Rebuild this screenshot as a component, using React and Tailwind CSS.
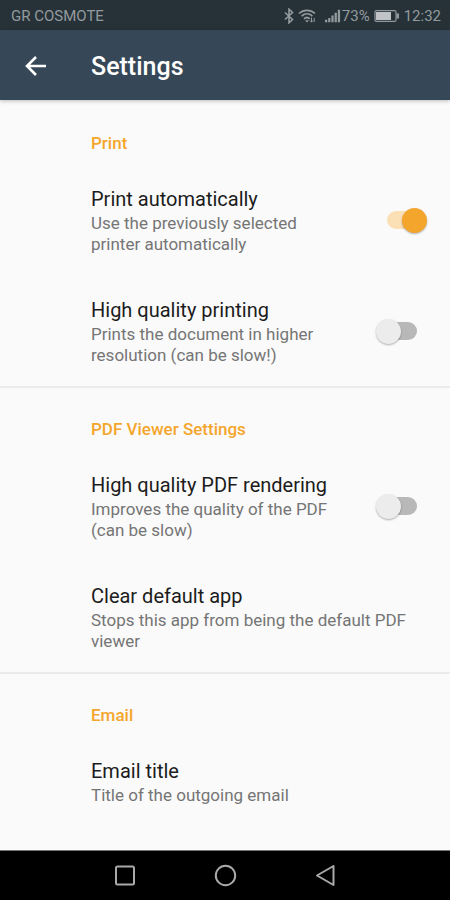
import { useState } from 'react';

const SECTIONS = [
  {
    title: 'Print',
    items: [
      {
        id: 'print-auto',
        title: 'Print automatically',
        summary: 'Use the previously selected printer automatically',
        toggle: true,
      },
      {
        id: 'print-hq',
        title: 'High quality printing',
        summary: 'Prints the document in higher resolution (can be slow!)',
        toggle: true,
      },
    ],
  },
  {
    title: 'PDF Viewer Settings',
    items: [
      {
        id: 'pdf-hq',
        title: 'High quality PDF rendering',
        summary: 'Improves the quality of the PDF (can be slow)',
        toggle: true,
      },
      {
        id: 'clear-default',
        title: 'Clear default app',
        summary: 'Stops this app from being the default PDF viewer',
      },
    ],
  },
  {
    title: 'Email',
    items: [
      {
        id: 'email-title',
        title: 'Email title',
        summary: 'Title of the outgoing email',
      },
    ],
  },
];

function StatusBar() {
  return (
    <div className="flex h-[30px] items-center justify-between bg-[#263238] pt-0.5 pr-[9px] pl-[11px] text-[15px] leading-5 text-[#939a9e]">
      <span>GR COSMOTE</span>
      <div className="flex items-center">
        <svg className="mr-1 h-4 w-[10px]" viewBox="0 0 10 16" fill="none" stroke="currentColor" strokeWidth="1.6">
          <path d="M1 4.5 8.5 11.5 5 14.8V1.2L8.5 4.5 1 11.5" />
        </svg>
        <svg className="mr-2 h-4 w-[18px]" viewBox="0 0 18 16" fill="none" stroke="currentColor" strokeWidth="1.7">
          <path d="M1 5.5C5.5 1.2 12.5 1.2 17 5.5" />
          <path d="M3.6 8.2C6.8 5.2 11.2 5.2 14.4 8.2" />
          <path d="M6 10.8C7.8 9.2 10 9.2 11.8 10.8" />
          <path d="M7 12.2h4L9 14.6z" fill="currentColor" stroke="none" />
          <path d="M13.5 9.5v4.5M12 12.5l1.5 1.7 1.5-1.7M16.2 14v-4" strokeWidth="1" />
        </svg>
        <svg className="mr-px h-4 w-[17px]" viewBox="0 0 18 16" fill="currentColor">
          <path d="M1 12h2.400v2.500H1zM4.400 10h2.400v4.500h-2.400zM7.800 7.500h2.400v7h-2.400zM11.200 4.500h2.400v10h-2.400zM14.600 1.500h2.400v13h-2.400z" />
        </svg>
        <span className="mr-1">73%</span>
        <svg className="mr-1 h-3 w-[26px]" viewBox="0 0 26 12">
          <rect x="1" y="0.600" width="21" height="10.800" rx="1.500" fill="none" stroke="currentColor" strokeWidth="1.200" />
          <rect x="2" y="2" width="15" height="8" fill="#c0c4c6" />
          <path d="M22.500 3.500H25v5h-2.500z" fill="currentColor" />
        </svg>
        <span>12:32</span>
      </div>
    </div>
  );
}

function Toggle({ id, checked, onChange }) {
  return (
    <span className="relative flex h-8 w-[51px] shrink-0 items-center justify-center">
      <input
        id={id}
        type="checkbox"
        role="switch"
        checked={checked}
        onChange={onChange}
        className="peer h-[18px] w-[30px] appearance-none rounded-full bg-[#b8b8b8] checked:bg-[#fbe0b5]"
      />
      <span className="pointer-events-none absolute left-0 size-[25px] rounded-full bg-[#ececec] shadow-[0_1px_2px_rgba(0,0,0,0.3)] peer-checked:right-0 peer-checked:left-auto peer-checked:bg-[#f4a62c]" />
    </span>
  );
}

function SettingText({ item }) {
  return (
    <>
      <span className="block text-xl leading-7 text-[#1c1c1c]">{item.title}</span>
      <span className="block text-[17px] leading-[21px] text-[#757575]">{item.summary}</span>
    </>
  );
}

function SettingRow({ item, checked, onToggle }) {
  if (item.toggle) {
    return (
      <div className="flex items-center justify-between pt-[23px] pr-[23px] pb-[18px] pl-[91px]">
        <label htmlFor={item.id} className="max-w-[250px]">
          <SettingText item={item} />
        </label>
        <Toggle id={item.id} checked={checked} onChange={onToggle} />
      </div>
    );
  }

  return (
    <button type="button" className="block w-full pt-[23px] pr-5 pb-[18px] pl-[91px] text-left">
      <SettingText item={item} />
    </button>
  );
}

export default function App() {
  const [values, setValues] = useState({ 'print-auto': true, 'print-hq': false, 'pdf-hq': false });

  const toggle = (id) => setValues((prev) => ({ ...prev, [id]: !prev[id] }));

  return (
    <div className="flex min-h-screen flex-col bg-[#fafafa] font-[Roboto,sans-serif]">
      <StatusBar />
      <header className="flex h-[70px] items-center bg-[#364857] pt-1 pl-6 text-white shadow-[0_1px_4px_rgba(0,0,0,0.25)]">
        <button type="button" aria-label="Back" className="mr-[43px]">
          <svg className="size-6" viewBox="0 0 24 24" fill="none" stroke="currentColor" strokeWidth="2.600">
            <path d="M22 11H3.500M12 2 3 11l9 9" />
          </svg>
        </button>
        <h1 className="text-[25px] leading-8 font-medium">Settings</h1>
      </header>

      <main className="flex-1 pt-0.5">
        {SECTIONS.map((section) => (
          <section key={section.title} className="border-[#ebebeb] pb-0.5 not-first:border-t-2">
            <h2 className="pt-[31px] pb-[9px] pl-[91px] text-[17px] leading-5 font-medium text-[#f4a62c]">
              {section.title}
            </h2>
            {section.items.map((item) => (
              <SettingRow
                key={item.id}
                item={item}
                checked={values[item.id]}
                onToggle={() => toggle(item.id)}
              />
            ))}
          </section>
        ))}
      </main>

      <nav className="flex h-[50px] items-center justify-center gap-[76px] border-t border-[#777] bg-black text-[#a9a9a9]">
        <button type="button" aria-label="Recent apps">
          <svg className="size-6" viewBox="0 0 24 24" fill="none" stroke="currentColor" strokeWidth="2">
            <rect x="3" y="2.500" width="18" height="18" rx="1.500" />
          </svg>
        </button>
        <button type="button" aria-label="Home">
          <svg className="size-6" viewBox="0 0 24 24" fill="none" stroke="currentColor" strokeWidth="2">
            <circle cx="12.500" cy="11.500" r="9.700" />
          </svg>
        </button>
        <button type="button" aria-label="Back">
          <svg className="size-6" viewBox="0 0 24 24" fill="none" stroke="currentColor" strokeWidth="2" strokeLinejoin="round">
            <path d="M20.500 2v19L4 11.500z" />
          </svg>
        </button>
      </nav>
    </div>
  );
}
